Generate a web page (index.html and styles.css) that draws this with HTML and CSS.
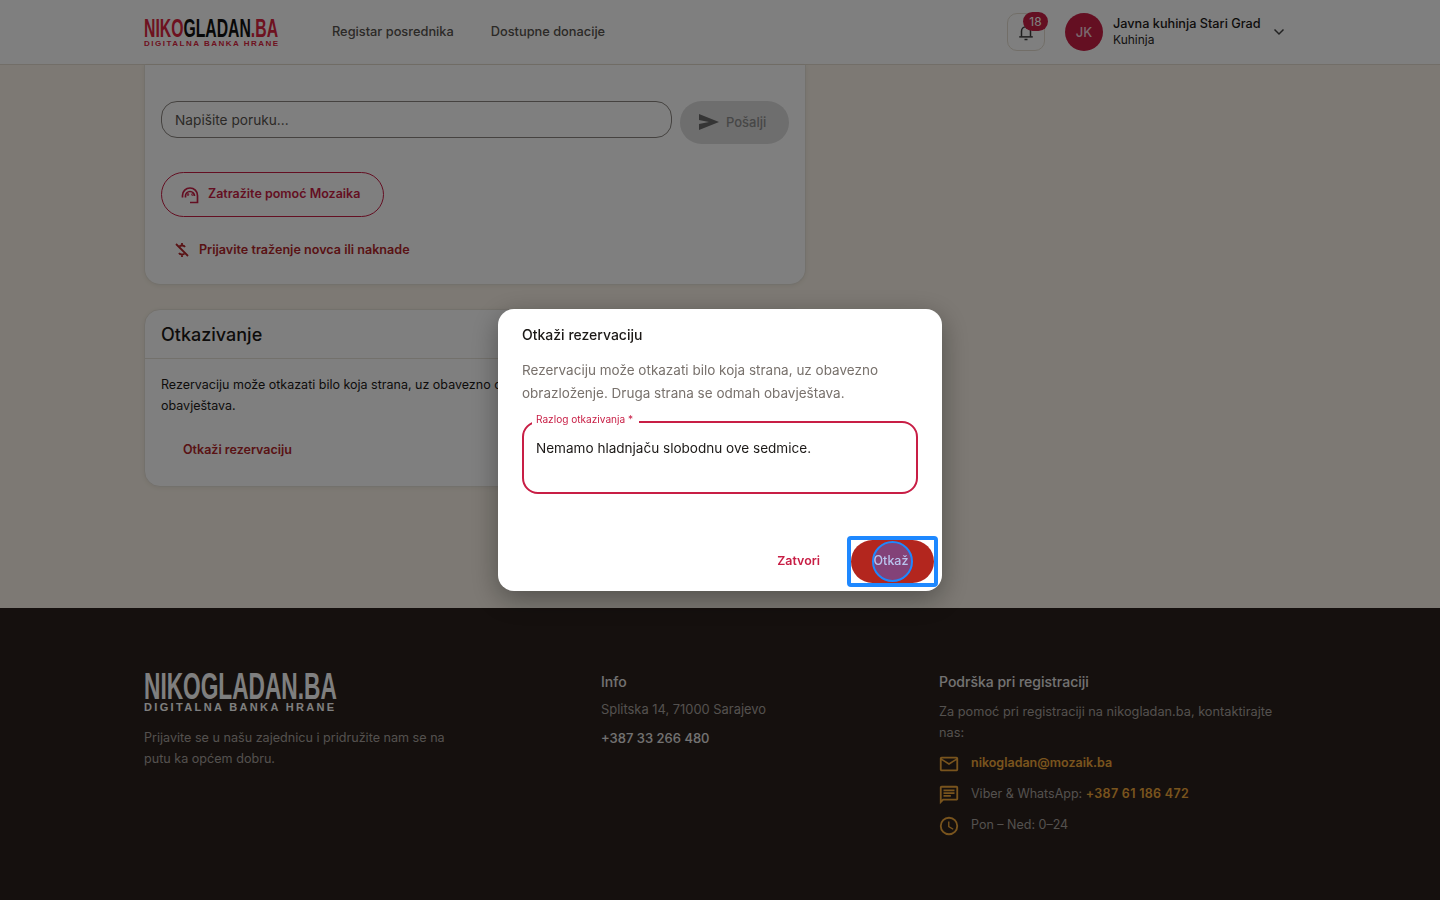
FILE: index.html
```html
<!DOCTYPE html>
<html lang="bs">
<head>
    <meta charset="UTF-8">
    <title>NikoGladan.ba</title>
    <link rel="stylesheet" href="styles.css">
</head>
<body>
<header class="topbar">
    <div class="topbar-inner">
        <div class="logo">
            <div class="logo-name"><span class="logo-red">NIKO</span>GLADAN<span class="logo-red">.BA</span></div>
            <div class="logo-sub logo-red">DIGITALNA BANKA HRANE</div>
        </div>
        <nav class="nav">
            <a>Registar posrednika</a>
            <a>Dostupne donacije</a>
        </nav>
        <div class="user-area">
            <div class="bell">
                <svg width="18" height="18" viewBox="0 0 24 24" fill="none" stroke="#3d3d3d" stroke-width="2"><path d="M6 18v-7a6 6 0 0 1 12 0v7"/><path d="M3 18.500h18"/><path d="M10 22h4"/></svg>
                <span class="bell-badge">18</span>
            </div>
            <div class="avatar">JK</div>
            <div class="user-text">
                <div class="user-name">Javna kuhinja Stari Grad</div>
                <div class="user-role">Kuhinja</div>
            </div>
            <svg class="chevron" width="12" height="8" viewBox="0 0 12 8" fill="none" stroke="#444" stroke-width="1.5"><path d="M1.500 1.500 6 6l4.500-4.500"/></svg>
        </div>
    </div>
</header>

<main class="content">
    <section class="card chat-card">
        <div class="message-row">
            <div class="message-input">Napišite poruku...</div>
            <button class="send-btn">
                <svg width="20" height="16" viewBox="0 0 20 16" fill="#6a6a6a"><path d="M0 0 20 8 0 16 0 10 10 8 0 6z"/></svg>
                Pošalji
            </button>
        </div>
        <button class="help-btn">
            <svg class="help-icon" width="18" height="18" viewBox="0 0 18 18" fill="none" stroke="#c81e45" stroke-width="1.700"><path d="M1.500 11.500V9.500a7.500 7.500 0 0 1 15 0v7H9"/><path d="M4.500 11.500V10a4.500 4.500 0 0 1 9 0"/><circle cx="7" cy="8.500" r=".4"/><circle cx="11.500" cy="8.500" r=".4"/></svg>
            Zatražite pomoć Mozaika
        </button>
        <a class="report-link">
            <svg width="16" height="16" viewBox="0 0 16 16" fill="none" stroke="#b3262b" stroke-width="1.800"><path d="M2 2l12 12"/><path d="M8 1v2M8 13v2M11 5c-.5-1-1.500-1.500-3-1.500-1 0-2 .3-2.500 1M5 11c.5 1 1.500 1.500 3 1.500 1 0 2-.3 2.500-1"/></svg>
            Prijavite traženje novca ili naknade
        </a>
    </section>

    <section class="card cancel-card">
        <h2 class="card-title">Otkazivanje</h2>
        <div class="card-body">
            <p>Rezervaciju može otkazati bilo koja strana, uz obavezno obrazloženje. Druga strana se odmah obavještava.</p>
            <a class="cancel-link">Otkaži rezervaciju</a>
        </div>
    </section>
</main>

<footer class="footer">
    <div class="footer-inner">
        <div class="footer-col-brand">
            <div class="footer-logo">
                <div class="footer-logo-name">NIKOGLADAN.BA</div>
                <div class="footer-logo-sub">DIGITALNA BANKA HRANE</div>
            </div>
            <p class="footer-text">Prijavite se u našu zajednicu i pridružite nam se na putu ka općem dobru.</p>
        </div>
        <div class="footer-col-info">
            <h3>Info</h3>
            <div class="footer-address">Splitska 14, 71000 Sarajevo</div>
            <div class="footer-phone">+387 33 266 480</div>
        </div>
        <div class="footer-col-support">
            <h3>Podrška pri registraciji</h3>
            <p class="footer-text">Za pomoć pri registraciji na nikogladan.ba, kontaktirajte nas:</p>
            <div class="contact-list">
                <div class="contact-row">
                    <svg width="22" height="22" viewBox="0 0 24 24" fill="#f2a93b"><path d="M22 6c0-1.100-.9-2-2-2H4c-1.100 0-2 .9-2 2v12c0 1.100.9 2 2 2h16c1.100 0 2-.9 2-2V6zm-2 0-8 5-8-5h16zm0 12H4V8l8 5 8-5v10z"/></svg>
                    <span class="accent">nikogladan@mozaik.ba</span>
                </div>
                <div class="contact-row">
                    <svg width="22" height="22" viewBox="0 0 24 24" fill="#f2a93b"><path d="M20 2H4c-1.100 0-2 .9-2 2v18l4-4h14c1.100 0 2-.9 2-2V4c0-1.100-.9-2-2-2zm0 14H5.200L4 17.200V4h16v12zM6 12h8v2H6zm0-3h12v2H6zm0-3h12v2H6z"/></svg>
                    <span>Viber &amp; WhatsApp: <span class="accent accent-phone">+387 61 186 472</span></span>
                </div>
                <div class="contact-row">
                    <svg width="22" height="22" viewBox="0 0 24 24" fill="#f2a93b"><path d="M12 2a10 10 0 1 0 0 20 10 10 0 0 0 0-20zm0 18a8 8 0 1 1 0-16 8 8 0 0 1 0 16zm.5-13H11v6l5.200 3.100.8-1.200-4.500-2.700V7z"/></svg>
                    <span>Pon – Ned: 0–24</span>
                </div>
            </div>
        </div>
    </div>
</footer>

<div class="backdrop">
    <div class="dialog">
        <h2 class="dialog-title">Otkaži rezervaciju</h2>
        <p class="dialog-text">Rezervaciju može otkazati bilo koja strana, uz obavezno obrazloženje. Druga strana se odmah obavještava.</p>
        <div class="reason-field">
            <span class="reason-label">Razlog otkazivanja *</span>
            <div class="reason-value">Nemamo hladnjaču slobodnu ove sedmice.</div>
        </div>
        <div class="dialog-actions">
            <button class="close-btn">Zatvori</button>
            <div class="focus-frame">
                <button class="confirm-btn"><span class="ripple"></span><span class="confirm-label">Otkaž</span></button>
            </div>
        </div>
    </div>
</div>
</body>
</html>
```

FILE: styles.css
```css
* {
    box-sizing: border-box;
}

body {
    margin: 0;
    height: 900px;
    overflow: hidden;
    background-color: #faf3e8;
    font-family: Inter, "Liberation Sans", sans-serif;
    color: #1c1917;
    display: flex;
    flex-direction: column;
}

button {
    font-family: inherit;
    border: none;
    cursor: pointer;
}

/* header */
.topbar {
    height: 65px;
    background-color: #fff;
    border-bottom: 1px solid #e4ddd0;
    flex-shrink: 0;
}

.topbar-inner {
    width: 1152px;
    margin: 0 auto;
    height: 100%;
    display: flex;
    align-items: center;
}

.logo {
    width: 136px;
}

.logo-name {
    font-family: "Liberation Sans", sans-serif;
    font-weight: 700;
    font-size: 26.5px;
    line-height: 22px;
    height: 22px;
    color: #111;
    white-space: nowrap;
    transform: scaleX(.595);
    transform-origin: left center;
}

.logo-red {
    color: #dc2440;
}

.logo-sub {
    font-family: "Liberation Sans", sans-serif;
    font-weight: 700;
    font-size: 8px;
    line-height: 7px;
    margin-top: 1px;
    letter-spacing: 1.5px;
    white-space: nowrap;
}

.nav {
    display: flex;
    gap: 37px;
    margin-left: 52px;
    font-size: 12.8px;
    font-weight: 500;
    color: #57534e;
    margin-top: -2px;
}

.user-area {
    margin-left: auto;
    display: flex;
    align-items: center;
    width: 283px;
    margin-right: 6px;
}

.bell {
    position: relative;
    width: 38px;
    height: 38px;
    border: 1px solid #e4ddd0;
    border-radius: 10px;
    display: flex;
    align-items: center;
    justify-content: center;
}

.bell-badge {
    position: absolute;
    top: -2px;
    left: 15px;
    width: 25px;
    height: 19px;
    border-radius: 10px;
    background-color: #c81e45;
    color: #fff;
    font-size: 12px;
    line-height: 19px;
    text-align: center;
}

.avatar {
    width: 38px;
    height: 38px;
    border-radius: 50%;
    background-color: #c81e45;
    color: #f5d5dc;
    font-size: 13px;
    font-weight: 500;
    text-align: center;
    line-height: 38px;
    margin-left: 20px;
}

.user-text {
    margin: -1px 0 0 10px;
    width: 154px;
}

.user-name {
    font-size: 12.7px;
    font-weight: 500;
    line-height: 16px;
    white-space: nowrap;
}

.user-role {
    font-size: 12px;
    line-height: 15px;
    color: #292524;
}

.chevron {
    margin-left: 6px;
}

/* page content */
.content {
    width: 662px;
    margin-left: 144px;
    height: 543px;
    flex-shrink: 0;
}

.card {
    background-color: #fff;
    border: 1px solid #e7e2d8;
    border-radius: 16px;
    box-shadow: 0 1px 4px rgba(60, 50, 30, .08);
}

.chat-card {
    height: 220px;
    border-top: none;
    border-radius: 0 0 16px 16px;
    padding: 36px 16px 0;
}

.message-row {
    display: flex;
    gap: 8px;
    align-items: flex-start;
}

.message-input {
    width: 511px;
    height: 37px;
    border: 1px solid #8a8580;
    border-radius: 16px;
    padding: 0 13px;
    font-size: 13.7px;
    line-height: 36px;
    color: #57534e;
}

.send-btn {
    width: 109px;
    height: 43px;
    border-radius: 22px;
    background-color: #dcdcdc;
    color: #8f8f8f;
    font-size: 13px;
    font-weight: 500;
    display: flex;
    align-items: center;
    gap: 7px;
    padding: 0 0 2px 19px;
}

.help-btn {
    display: flex;
    align-items: center;
    gap: 9px;
    margin-top: 28px;
    width: 223px;
    height: 45px;
    padding: 0 0 2px 19px;
    background: none;
    border: 1px solid #c81e45;
    border-radius: 23px;
    color: #c81e45;
    font-size: 12.5px;
    font-weight: 600;
}

.help-icon {
    margin-top: 3px;
}

.report-link {
    display: flex;
    align-items: center;
    gap: 9px;
    margin: 24px 0 0 13px;
    color: #b3262b;
    font-size: 12.6px;
    font-weight: 600;
    line-height: 18px;
}

.cancel-card {
    margin-top: 24px;
    height: 178px;
}

.card-title {
    margin: 0;
    height: 49px;
    padding: 0 16px;
    font-size: 18px;
    font-weight: 500;
    line-height: 50px;
    border-bottom: 1px solid #e7e2d8;
}

.card-body {
    padding: 15px 16px;
    font-size: 12.5px;
    line-height: 21px;
}

.card-body p {
    margin: 0;
}

.cancel-link {
    display: block;
    margin: 23px 0 0 22px;
    color: #b3262b;
    font-weight: 600;
}

/* footer */
.footer {
    flex: 1;
    background-color: #2a201c;
    color: #a8a29e;
}

.footer-inner {
    width: 1152px;
    margin: 0 auto;
    display: flex;
    padding-top: 63px;
}

.footer-col-brand {
    width: 457px;
}

.footer-col-info {
    width: 338px;
}

.footer-col-support {
    width: 350px;
}

.footer-logo-name {
    font-family: "Liberation Sans", sans-serif;
    font-weight: 700;
    font-size: 37px;
    line-height: 31px;
    color: #fff;
    white-space: nowrap;
    transform: scaleX(.613);
    transform-origin: left center;
}

.footer-logo-sub {
    font-family: "Liberation Sans", sans-serif;
    font-weight: 700;
    font-size: 11px;
    line-height: 11px;
    letter-spacing: 2.35px;
    color: #fff;
    white-space: nowrap;
}

.footer-text {
    margin: 0;
    font-size: 12.75px;
    line-height: 21px;
    color: #a8a29e;
}

.footer-col-brand .footer-text {
    margin-top: 14px;
    width: 310px;
    font-size: 12.6px;
}

.footer h3 {
    margin: 0 0 8px;
    font-size: 14px;
    font-weight: 500;
    line-height: 22px;
    color: #e7e5e4;
}

.footer-address {
    font-size: 12.9px;
    line-height: 21px;
    margin-top: -2px;
}

.footer-phone {
    margin-top: 8px;
    font-size: 13px;
    line-height: 21px;
    font-weight: 500;
    color: #e7e5e4;
}

.contact-list {
    display: flex;
    flex-direction: column;
    gap: 10px;
    margin-top: 9px;
}

.contact-row {
    display: flex;
    align-items: center;
    gap: 11px;
    height: 21px;
    font-size: 12.5px;
}

.contact-row svg {
    margin: 2px 0 0 -1px;
}

.accent {
    color: #f2a93b;
    font-weight: 600;
}

.accent-phone {
    letter-spacing: .3px;
}

/* modal */
.backdrop {
    position: fixed;
    inset: 0;
    background-color: rgba(0, 0, 0, .5);
    display: flex;
    align-items: center;
    justify-content: center;
}

.dialog {
    width: 444px;
    height: 282px;
    background-color: #fff;
    border-radius: 16px;
    padding: 16px 24px 0;
    display: flex;
    flex-direction: column;
    box-shadow: 0 8px 28px rgba(0, 0, 0, .35);
}

.dialog-title {
    margin: 0;
    font-size: 14px;
    font-weight: 500;
    line-height: 20px;
}

.dialog-text {
    margin: 14px 0 0;
    font-size: 13.5px;
    line-height: 23px;
    color: #78716c;
}

.reason-field {
    position: relative;
    margin-top: 16px;
    height: 73px;
    border: 2px solid #c81e45;
    border-radius: 16px;
    padding: 15px 12px;
}

.reason-label {
    position: absolute;
    top: -11px;
    left: 8px;
    padding: 0 6px 0 4px;
    background-color: #fff;
    color: #c81e45;
    font-size: 10.1px;
    line-height: 14px;
}

.reason-value {
    font-size: 13.55px;
    line-height: 20px;
}

.dialog-actions {
    display: flex;
    align-items: center;
    margin-top: 42px;
}

.close-btn {
    margin: -3px 0 0 auto;
    background: none;
    color: #c81e45;
    font-size: 12.4px;
    font-weight: 600;
    padding: 0;
}

.focus-frame {
    margin: 0 -20px 0 27px;
    width: 91px;
    height: 51px;
    border: 4px solid #1e88ff;
    border-radius: 4px;
    background-color: #fff;
}

.confirm-btn {
    position: relative;
    display: block;
    width: 83px;
    height: 43px;
    border-radius: 22px;
    background-color: #b3261e;
    font-size: 12.5px;
    font-weight: 500;
    padding: 0 3px 2px 0;
}

.confirm-label {
    position: relative;
    color: #b9c4ee;
}

.ripple {
    position: absolute;
    left: 21px;
    top: 1px;
    width: 41px;
    height: 41px;
    border: 2px solid #1e88ff;
    border-radius: 50%;
    background-color: rgba(60, 110, 255, .4);
}
```
